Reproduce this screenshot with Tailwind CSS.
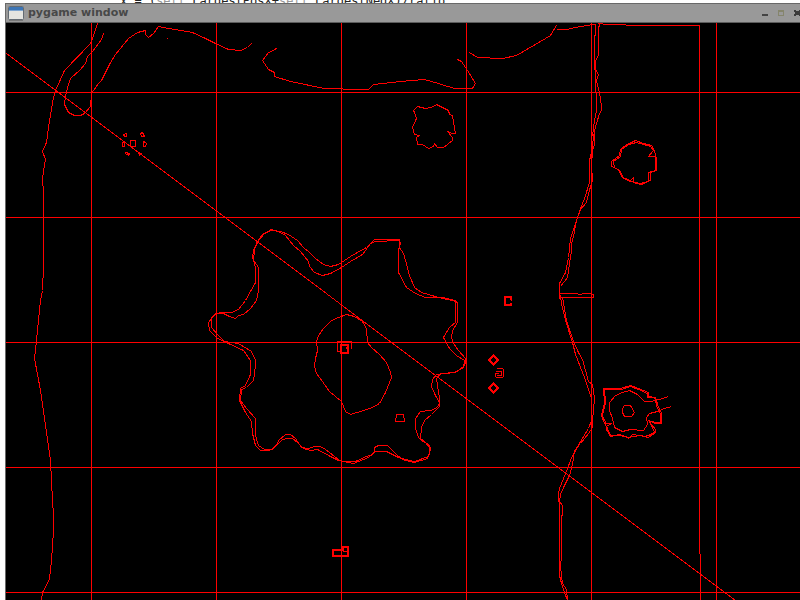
<!DOCTYPE html>
<html lang="en">
<head>
<meta charset="utf-8">
<title>pygame window</title>
<script src="https://cdn.jsdelivr.net/npm/@tailwindcss/browser@4"></script>
</head>
<body class="h-screen overflow-hidden bg-white flex flex-col">
<div class="h-[3px] shrink-0 overflow-hidden flex items-end pl-[120px] bg-white">
<pre class="-mb-[5px] text-[12px] leading-[14px] text-[#222] font-['DejaVu_Sans_Mono',monospace]">x = (<span class="text-[#999]">self</span>.LargestPosX+<span class="text-[#999]">self</span>.LargestNegX)/ratio</pre>
</div>
<main class="flex-1 min-h-0 ml-[5px] flex flex-col border-l border-t border-[#696969] bg-black">
<header class="h-[19px] shrink-0 flex items-center bg-[#999] border-b border-[#5c5c5c] pl-[2px] overflow-hidden">
<svg class="w-4 h-[15px] shrink-0" viewBox="0 0 16 15" aria-hidden="true">
<rect x=".5" y=".5" width="15" height="13" rx="1" fill="#e4e4e0" stroke="#636b73"/>
<rect x="1" y="1" width="14" height="3" fill="#3d75b5"/><rect x="1" y="4" width="14" height="1" fill="#7da5d0"/>
<path d="M1 14.5H15" stroke="#777"/>
</svg>
<h1 class="ml-1 flex-1 whitespace-nowrap text-[11px] leading-4 font-bold text-[#484848] font-['DejaVu_Sans',sans-serif]">pygame window</h1>
<div class="flex items-center gap-[9px] -mr-px shrink-0">
<button class="block" aria-label="Minimize"><svg class="block w-[7px] h-[7px]" viewBox="0 0 7 7" shape-rendering="crispEdges"><path d="M0 4h6v2H0z" fill="#444"/></svg></button>
<button class="block" aria-label="Maximize"><svg class="block w-[7px] h-[7px]" viewBox="0 0 7 7" shape-rendering="crispEdges"><path d="M0 0h6v6H0zM1 2v3h4V2z" fill="#85856c" fill-rule="evenodd"/></svg></button>
<button class="block" aria-label="Close"><svg class="block w-[7px] h-[7px]" viewBox="0 0 7 7" shape-rendering="crispEdges"><path d="M0 0h2v1h3V0h2v2H6v2h1v2H5V5H2v1H0V4h1V2H0z" fill="#3c3c3c"/></svg></button>
</div>
</header>
<svg class="block w-full flex-1 min-h-0 overflow-hidden" role="img" aria-label="Map outlines" shape-rendering="crispEdges">
<g transform="translate(-5.5 -22.5)" fill="none" stroke="#f00" stroke-width="1">
<!-- grid -->
<path d="M91 22V9000M216 22V9000M341 22V9000M466 22V9000M591 22V9000M716 22V9000M5 92H9000M5 217H9000M5 342H9000M5 467H9000M5 592H9000"/>
<path d="M6 53L735 600"/>
<!-- west coast -->
<path d="M97 23L91 41L90 43L64 70L55 90L53 97L48 127L46 142L42 151L45 159L43 170L42 180L43 190V265L42 290L40 300L36 340L34 358L40 390L50 460L52 500L53 515V530L51 560L49 578L47 583L42 592L41 600"/>
<path d="M103 33L101 39L98 43L92 51L87 56L85 63L79 70L70 78L67 87L65 96L64 104L68 112L74 115L80 115L84 113L90 106L91 93L98 83L101 80L109 64L115 54L128 38L137 32L145 30V34L148 37L153 33L158 26L163 27L192 32L205 38L215 43L228 49L240 50L247 47L251 43M166 38h1"/>
<path d="M277 47L273 50L268 52L262 60L268 69L274 72V76L290 81L324 88H342L343 89H368L373 84L400 81L423 79L428 80L454 88H472L475 83L467 70L461 61L457 59"/>
<path d="M469 52L477 57L502 58L516 55L540 41L550 35L556 25M556 29H566L575 27L592 24H595V34L594 36V69L595 70V92L596 93V110L594 120L592 135L593 134L592 148L589 160V182L584 198L579 211L575 223L570 238L568 257L565 272L559 283V298"/>
<path d="M598 23L606 24H625L626 25H699V553L700 554V600"/>
<path d="M599 24L598 28V54L595 61V69L598 74L596 80L599 92L601 106V110L599 113L594 130V144L592 150L591 165L592 180L588 193L586 202L580 209L576 220L573 236L571 243V250L569 263L567 277L560 286"/>
<path d="M558 293H577L578 294H581L582 293H591V294H593V297H558"/>
<path d="M560 295L561 303L565 320L572 342L575 354L584 377L591 398V420L588 428L580 441L574 452L572 455L565 473L559 488L558 494V500L559 503V575L561 583L564 592L567 600"/>
<path d="M562 297L566 320L573 341L578 352L582 359L588 381L592 384L594 398L592 420V427L588 433L580 443L574 450L572 464L569 475L563 487L560 494L559 501L562 505V514L561 516V556L560 565L561 575L562 583L566 589L567 600"/>
<!-- hills -->
<path d="M413 110L417 106L425 108L431 107L436 104L442 107L448 110L449 114L452 115L454 127L455 133H452L447 131L452 137V140L443 147H437L434 143L433 146L428 148L422 144H417L416 137L419 135L414 134L412 127L416 118L414 112Z"/>
<path d="M635 140L625 145L620 149L619 155L611 161V166L618 169L622 177L630 180L633 177V182L641 184L650 180V172L656 170V159L654 150L651 145L643 143Z"/>
<path d="M636 142L628 144L621 149L620 156L613 161L614 167L619 170L623 178L630 181L640 183L648 181V172L655 170V156H648L653 150L650 146Z"/>
<!-- ring of stones -->
<path d="M123 134L126 133V136H124ZM140 133L142 132L144 136H141ZM130 140H135V146H130ZM122 142H124V146H122ZM143 141L145 142L146 143L145 146H143ZM125 152L129 153L128 155L125 153ZM138 152L141 153L139 155Z"/>
<!-- central plateau -->
<path d="M350 256L338 264L330 266L323 264L315 258L309 252L303 247L297 240L288 234L280 231L271 230L262 234L257 241L253 250L252 258L258 267V290L256 300L250 308L243 314L238 315L235 318L229 316L223 313H215L211 318V327L217 334L224 341L238 343L251 351L255 360V365L253 380L246 387L241 389L240 400L246 408L255 418V435L258 445L264 449H272L277 443L278 440L285 434H290L295 438L301 447L308 448L314 446H320L325 449L338 459L341 461L355 461L366 456L372 454L374 451V447L378 445H387L396 454L402 459L414 462L427 458L429 452L429 447L424 441L420 438L421 427L424 420L431 414L439 406V398L437 385L436 378L440 373L455 372L463 366L465 362V358L458 350L453 343L451 337L452 330L457 322V303L456 301L438 297L428 294L421 292L414 287L409 275L405 260L403 253L399 247V239H374L366 247L357 252Z"/>
<path d="M350 261L341 267L330 273L322 275L314 272L309 266L308 261L300 251L293 245L285 235L278 231L271 229L264 233L258 240L254 249L253 260L255 267V282L245 300L238 309L231 312H220L213 315L208 322L209 330L217 338L228 343L243 350L250 360V374L245 385L240 388L239 400L245 412L251 421L252 433L255 445L260 450H269L275 446L282 439L288 438H292L297 442L303 448L310 450L317 449L330 456L338 460L353 463L368 457L375 451H386L398 457L405 459L414 461L428 456L430 448L428 444L421 440L418 437L415 428V418L420 411L430 410L437 407L439 402L435 395L431 386L432 379L436 374L454 372L463 367L464 360L456 355L449 348L443 337L449 327L455 322V300L442 297H425L415 293L406 287L398 272V250L400 242L398 240L375 241L370 243L362 254Z"/>
<path d="M346 314L338 317L331 320L323 328L318 335L316 341L317 350L315 358L314 366L316 373L322 381L329 391L341 401L345 411L350 414L363 410L372 407L379 403L385 392L391 377L390 372L386 362L379 354L371 347L367 342L366 328L362 321L354 316Z"/>
<!-- buildings -->
<path d="M351 348V341H337V351H341M337 342H351M340 344H348V353H340ZM341 345H347V352H341ZM345 347H347M345 348H347"/>
<path d="M511 300V296H504V305H511V302M510 299V297H505V304H510V302"/>
<path d="M396 414H403V417L404 418V421H395V418L396 417Z"/>
<path d="M493 355L498 359.5L493 364L488 359.5ZM493 383L498 387.5L493 392L488 387.5Z" stroke-width="2"/>
<path d="M496 368H502L503 369V376L502 377H496L495 376V373H498M501 370V375H496M495 371H501"/>
<path d="M332 549H342V546H348V556H332ZM333 550H343V547H347V555H333ZM342 551H348"/>
<!-- eastern keep -->
<path d="M603 388H620L630 385L638 388L648 392V396L655 397L658 407L661 412V423H655L648 420L655 429V432L648 437L640 435L628 437L620 435H610L607 428L606 426L611 423H604L601 415L604 402Z"/>
<path d="M604 389H621L630 386L638 389L647 393L647 397H654L657 408L660 413V422H657L649 421L652 427L654 432L648 435L644 436L632 434L628 438L625 436L619 434L610 436L606 429L605 422L602 415L605 402Z"/>
<path d="M668 396L662 398L651 401H644L637 394L629 390L622 392L615 395L609 402V410L612 418L614 427L622 431L630 429L643 430L647 424L646 417L649 413L657 411L664 408L671 406"/>
<path d="M624 405H630L634 412L631 416H624L622 412V408Z"/>
</g>
</svg>
</main>
</body>
</html>
